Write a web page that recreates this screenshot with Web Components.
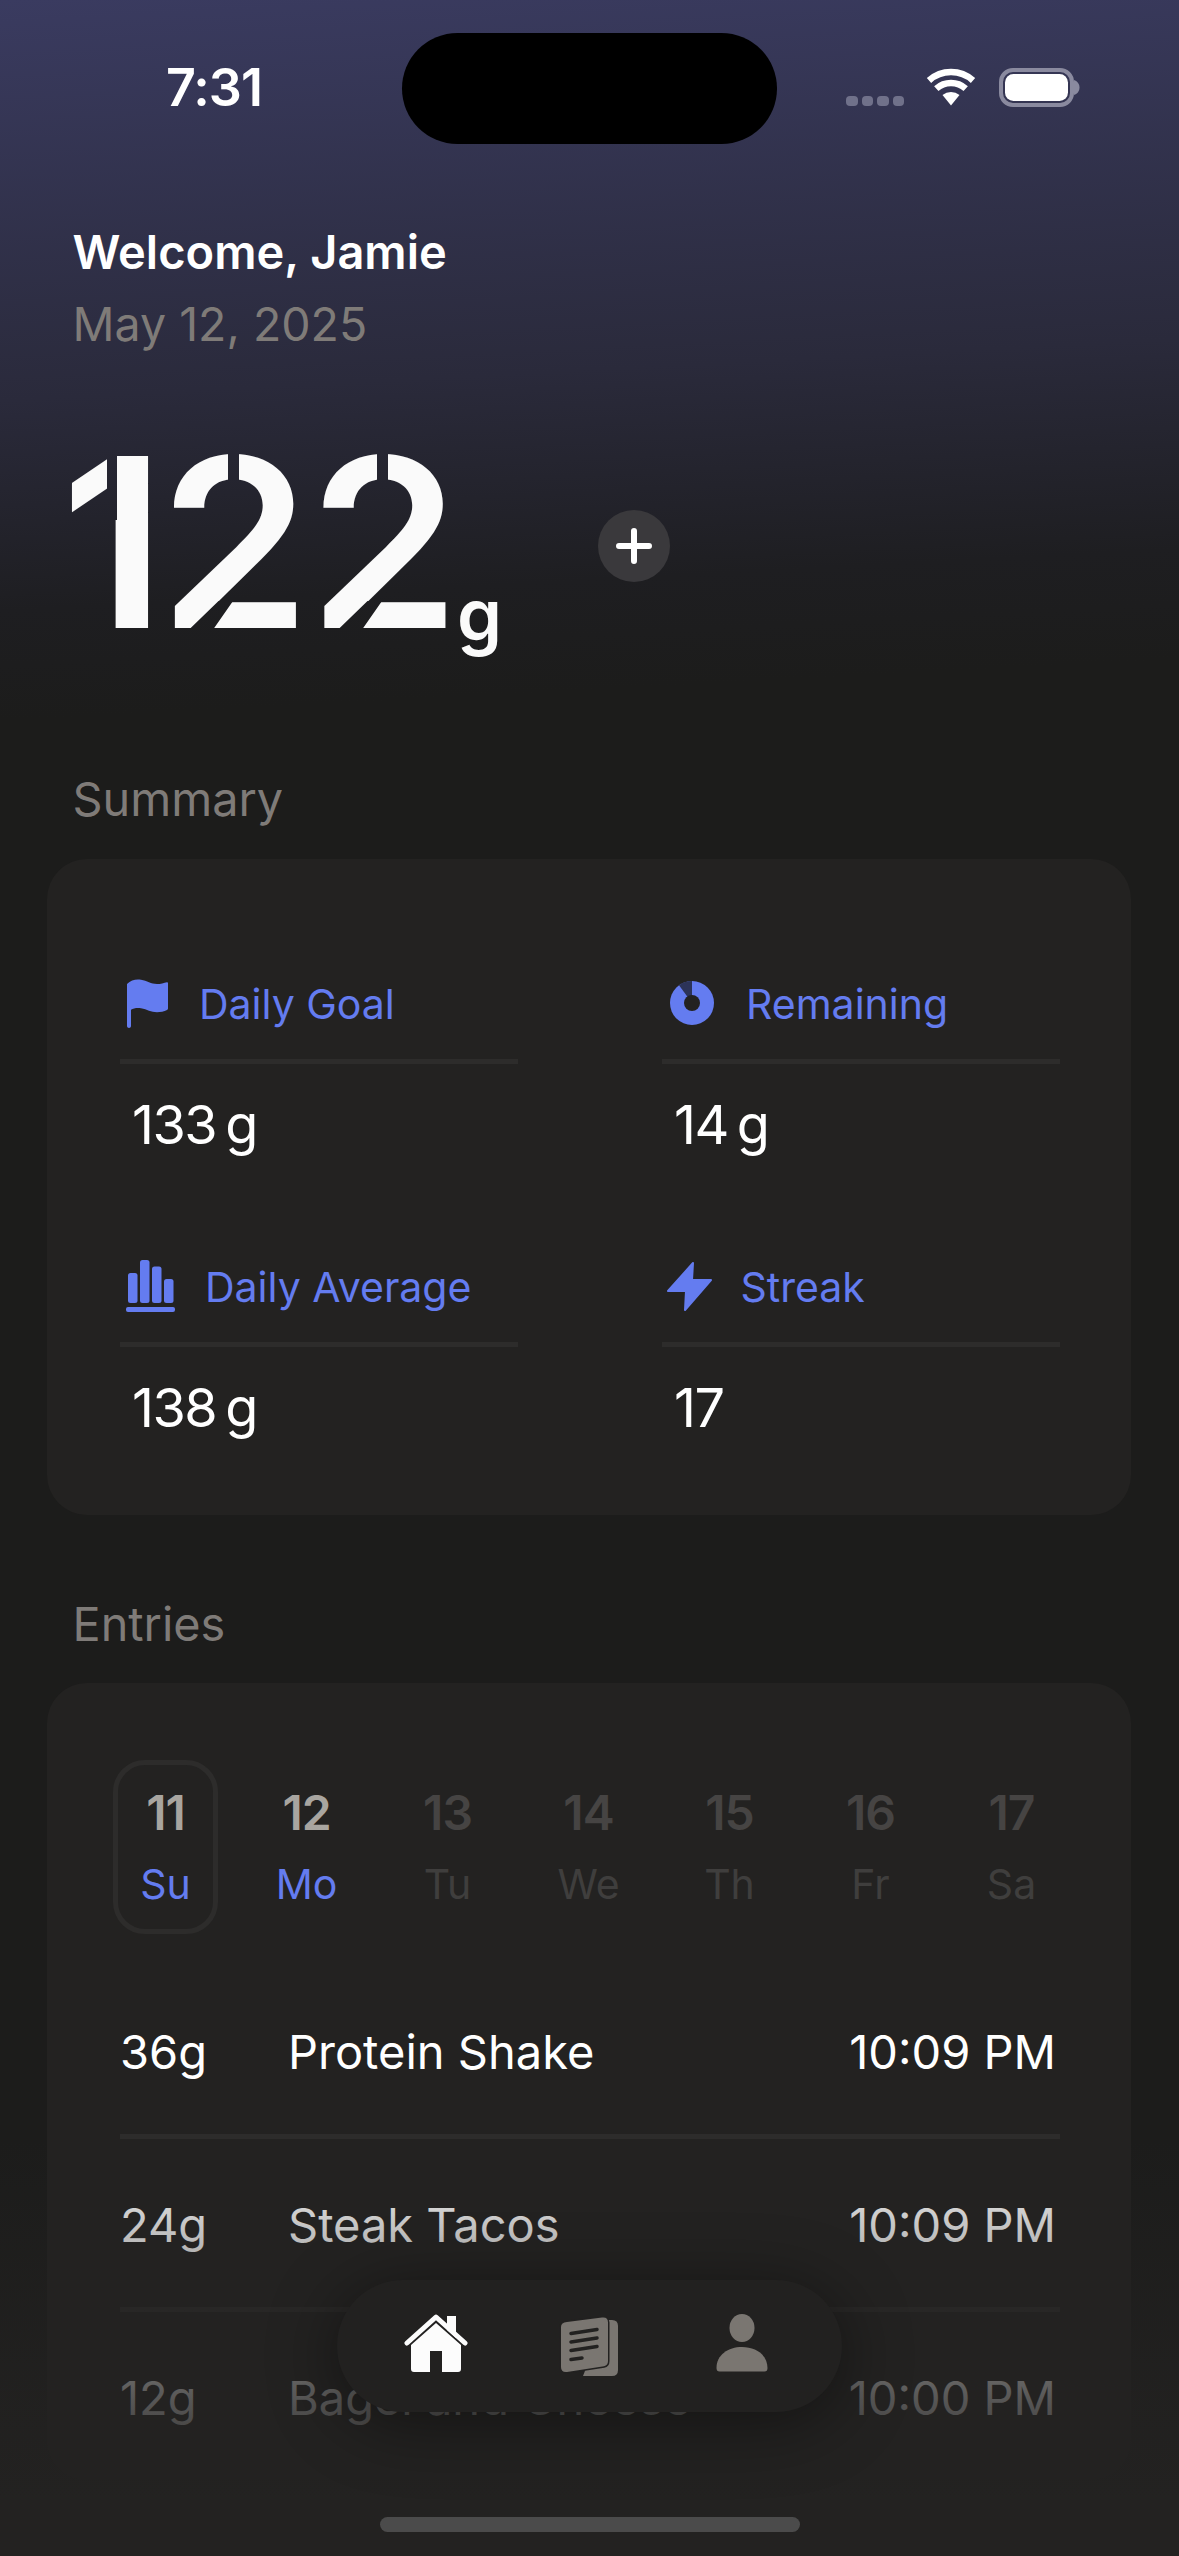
<!DOCTYPE html>
<html lang="en">
<head>
<meta charset="utf-8">
<title>Protein</title>
<style>
  html, body { margin: 0; padding: 0; background: #1c1c1b; }
</style>
</head>
<body>
<phone-app>
  <status-bar time="7:31"></status-bar>
  <greeting-header name="Jamie" date="May 12, 2025"></greeting-header>
  <protein-total unit="g"></protein-total>

  <section-card title="Summary" top="97" gap="30">
    <div class="stats" slot="body" style="display:grid;grid-template-columns:398px 398px;column-gap:144px;row-gap:100px;padding:116px 71px 74px 73px">
      <stat-cell label="Daily Goal" value="133" unit="g" style="--icon-w:79px">
        <svg slot="icon" width="41" height="49" viewBox="0 0 41 49" style="margin-left:7px"><path fill="#647cf0" d="M0 5C4 1 9 0 14 .8c6 1 10 4.200 16 4.200 3.500 0 7-1 10-1.800.5 0 1 .4 1 1v25c0 1-.4 1.400-1 1.700-3 1.300-6.500 2.300-10 2.300-6 0-10-3-16-4-4-.6-7.500 0-10 1.500V47c0 1.200-1 2-2 2s-2-.8-2-2z"/></svg>
      </stat-cell>
      <stat-cell label="Remaining" value="14" unit="g" style="--icon-w:84px">
        <svg slot="icon" width="44" height="44" viewBox="0 0 44 44" style="margin-left:8px"><circle cx="22" cy="22" r="22" fill="#647cf0"/><path fill="#2c3358" d="M22 22V0A22 22 0 0 0 9 4.200z"/><circle cx="22" cy="22" r="8" fill="#232221"/></svg>
      </stat-cell>
      <stat-cell label="Daily Average" value="138" unit="g" style="--icon-w:85px">
        <svg slot="icon" width="49" height="52" viewBox="0 0 49 52" style="margin-left:6px" fill="#647cf0"><rect x="2" y="13" width="9.500" height="30" rx="2.500"/><rect x="14" y="0" width="9.500" height="43" rx="2.500"/><rect x="26" y="6.500" width="9.500" height="36.500" rx="2.500"/><rect x="38" y="19" width="9.500" height="24" rx="2.500"/><rect x="0" y="47" width="49" height="5" rx="2"/></svg>
      </stat-cell>
      <stat-cell label="Streak" value="17" style="--icon-w:78.500px">
        <svg slot="icon" width="45" height="49" viewBox="0 0 45 49" style="margin-left:5px"><path fill="#647cf0" stroke="#647cf0" stroke-width="2" stroke-linejoin="round" d="M26 1 1 29h18l-1 19 26-30H25z"/></svg>
      </stat-cell>
    </div>
  </section-card>

  <section-card title="Entries" top="79" gap="29">
    <div slot="body" style="padding:77px 0 0 48px">
      <week-strip>
        <day-cell num="11" day="Su" state="selected"></day-cell>
        <day-cell num="12" day="Mo" state="today"></day-cell>
        <day-cell num="13" day="Tu"></day-cell>
        <day-cell num="14" day="We"></day-cell>
        <day-cell num="15" day="Th"></day-cell>
        <day-cell num="16" day="Fr"></day-cell>
        <day-cell num="17" day="Sa"></day-cell>
      </week-strip>
      <div style="padding:32px 71px 0 25px">
        <entry-row amount="36g" name="Protein Shake" time="10:09 PM"></entry-row>
        <entry-row amount="24g" name="Steak Tacos" time="10:09 PM"></entry-row>
        <entry-row amount="12g" name="Bagel and Cheese" time="10:00 PM"></entry-row>
      </div>
    </div>
  </section-card>

  <bottom-chrome></bottom-chrome>
</phone-app>

<script>
const FONT = `"Inter", "Liberation Sans", sans-serif`;

class PhoneApp extends HTMLElement {
  constructor() {
    super();
    this.attachShadow({ mode: 'open' });
    this.shadowRoot.innerHTML = `
      <style>
        :host {
          display: block;
          position: relative;
          width: 1179px;
          height: 2556px;
          overflow: hidden;
          color: #fff;
          font-family: ${FONT};
          background: linear-gradient(177deg, #3a3b60 0, #2a2a3b 400px, #1e1e21 610px, #1c1c1b 720px);
        }
      </style>
      <slot></slot>
    `;
  }
}

class StatusBar extends HTMLElement {
  constructor() {
    super();
    this.attachShadow({ mode: 'open' });
  }

  connectedCallback() {
    this.shadowRoot.innerHTML = `
      <style>
        :host { display: grid; grid-template-columns: 402px 375px 402px; height: 111px; padding-top: 33px; }
        .time { display: flex; justify-content: center; padding: 0 0 0 26px; align-items: center; height: 110px; font-size: 52px; font-weight: 600; letter-spacing: -1px; margin-top: -1px; }
        .island { background: #000; border-radius: 56px; }
        .icons { display: flex; align-items: flex-start; padding: 35px 0 0 69px; }
        .signal { display: flex; gap: 4px; margin-top: 28px; }
        .signal i { width: 11.500px; height: 10px; border-radius: 4px; background: #70718a; }
        .wifi { margin-left: 22px; }
        .batt { margin-left: 23px; }
      </style>
      <div class="time">${this.getAttribute('time')}</div>
      <div class="island"></div>
      <div class="icons">
        <div class="signal"><i></i><i></i><i></i><i></i></div>
        <svg class="wifi" width="50" height="38" viewBox="0 0 50 38" fill="none" stroke="#fff" stroke-width="6.500"><path d="M3 12.500a33 33 0 0 1 44 0"/><path d="M10.300 20.700a22 22 0 0 1 29.400 0"/><path fill="#fff" stroke="none" d="M25 37.500 16.500 27a13.500 13.500 0 0 1 17 0z"/></svg>
        <svg class="batt" width="81" height="39" viewBox="0 0 81 39"><rect x="2" y="2" width="71" height="35" rx="12" fill="none" stroke="#8a8a9f" stroke-width="4"/><rect x="6" y="6" width="63" height="27" rx="8.500" fill="#fff"/><path fill="#8a8a9f" d="M75 12c3 1 5.500 3.500 5.500 7.500S78 26 75 27z"/></svg>
      </div>
    `;
  }
}

class GreetingHeader extends HTMLElement {
  constructor() {
    super();
    this.attachShadow({ mode: 'open' });
  }

  connectedCallback() {
    this.shadowRoot.innerHTML = `
      <style>
        :host { display: block; margin-top: 71.500px; padding-left: 72.500px; font-size: 47px; line-height: 72px; }
        .hello { font-weight: 600; color: #fff; }
        .date { color: #7f7b78; font-size: 46.500px; }
      </style>
      <div class="hello">Welcome, ${this.getAttribute('name')}</div>
      <div class="date">${this.getAttribute('date')}</div>
    `;
  }
}

class ProteinTotal extends HTMLElement {
  constructor() {
    super();
    this.attachShadow({ mode: 'open' });
  }

  connectedCallback() {
    // stencil gaps are cut out of the real text with a vector mask
    const cut = (dx) => `M${168 + dx} 30H${179 + dx}V70H${168 + dx}Z` +
      `M${124.5 + dx} 222H${150 + dx}L${173 + dx} 189H${158.5 + dx}Z`;
    const path = `M0 0H400V260H0Z M47 28H57V108H47Z ${cut(0)} ${cut(149)}`;
    const svg = `<svg xmlns='http://www.w3.org/2000/svg' width='400' height='260'><path fill-rule='evenodd' d='${path}'/></svg>`;
    const mask = `url("data:image/svg+xml,${encodeURIComponent(svg)}")`;
    this.shadowRoot.innerHTML = `
      <style>
        :host { display: flex; align-items: flex-start; height: 260px; margin-top: 52.500px; padding-left: 60px; color: #fafafa; }
        .num { display: block; width: 397px; height: 260px; font-size: 236px; line-height: 260px; font-weight: 600; white-space: nowrap; -webkit-mask-image: ${mask}; mask-image: ${mask}; }
        .num span { display: inline-block; transform-origin: 0 50%; }
        .one { transform: translateX(.5px) scaleX(1.06); }
        .two { letter-spacing: -2px; transform: translateX(-1px) scaleX(1.03); }
        .unit { font-size: 72px; line-height: 72px; font-weight: 600; margin-top: 167px; }
        .add { display: flex; align-items: center; justify-content: center; width: 72px; height: 72px; margin: 98px 0 0 96px; border-radius: 50%; background: #3a393c; }
      </style>
      <div class="num"><span class="one">1</span><span class="two">22</span></div>
      <div class="unit">${this.getAttribute('unit')}</div>
      <div class="add"><svg width="36" height="36" viewBox="0 0 36 36" stroke="#fff" stroke-width="6" stroke-linecap="round"><path d="M18 3v30M3 18h30"/></svg></div>
    `;
  }
}

class SectionCard extends HTMLElement {
  constructor() {
    super();
    this.attachShadow({ mode: 'open' });
  }

  connectedCallback() {
    this.shadowRoot.innerHTML = `
      <style>
        :host { display: block; margin-top: ${this.getAttribute('top')}px; }
        h2 { margin: 0 0 ${this.getAttribute('gap')}px 72.500px; font-size: 46.800px; line-height: 60px; font-weight: 400; color: #7f7b78; }
        .card { margin: 0 48px 0 47px; border-radius: 40px; background: #232221; }
      </style>
      <h2>${this.getAttribute('title')}</h2>
      <div class="card"><slot name="body"></slot></div>
    `;
  }
}

class StatCell extends HTMLElement {
  constructor() {
    super();
    this.attachShadow({ mode: 'open' });
  }

  connectedCallback() {
    const unit = this.getAttribute('unit');
    this.shadowRoot.innerHTML = `
      <style>
        :host { display: block; }
        .head { display: flex; align-items: center; height: 56px; padding-bottom: 28px; border-bottom: 5px solid #2d2c2b; color: #647cf0; font-size: 41px; line-height: 56px; }
        .ico { display: flex; align-items: center; width: var(--icon-w, 80px); flex: none; }
        .head span { margin-top: 2px; }
        .val { margin-top: 28px; padding-left: 12px; font-size: 54px; line-height: 66px; letter-spacing: -1.500px; }
        .val span { margin-left: 9px; }
      </style>
      <div class="head"><div class="ico"><slot name="icon"></slot></div><span>${this.getAttribute('label')}</span></div>
      <div class="val">${this.getAttribute('value')}${unit ? `<span>${unit}</span>` : ''}</div>
    `;
  }
}

class WeekStrip extends HTMLElement {
  constructor() {
    super();
    this.attachShadow({ mode: 'open' });
    this.shadowRoot.innerHTML = `
      <style>
        :host { display: grid; grid-template-columns: repeat(7, 141px); }
      </style>
      <slot></slot>
    `;
  }
}

class DayCell extends HTMLElement {
  constructor() {
    super();
    this.attachShadow({ mode: 'open' });
  }

  connectedCallback() {
    const state = this.getAttribute('state') || '';
    this.shadowRoot.innerHTML = `
      <style>
        :host { display: block; }
        .box { box-sizing: border-box; width: 105px; height: 174px; margin: 0 auto; padding-top: 18px; border: 5px solid transparent; border-radius: 32px; text-align: center; color: #464443; }
        .box.selected { border-color: #2d2c2b; }
        .n { font-size: 48px; line-height: 60px; font-weight: 600; letter-spacing: -1px; }
        .d { margin-top: 13px; font-size: 41px; line-height: 56px; color: #3f3e3d; }
        .selected .n, .today .n { color: #a8a5a0; }
        .selected .d, .today .d { color: #647cf0; }
      </style>
      <div class="box ${state}">
        <div class="n">${this.getAttribute('num')}</div>
        <div class="d">${this.getAttribute('day')}</div>
      </div>
    `;
  }
}

class EntryRow extends HTMLElement {
  constructor() {
    super();
    this.attachShadow({ mode: 'open' });
  }

  connectedCallback() {
    this.shadowRoot.innerHTML = `
      <style>
        :host { display: flex; align-items: center; height: 165px; padding: 3px 4px 0 0; border-bottom: 5px solid #2d2c2b; font-size: 47px; color: #fff; }
        :host(:last-child) { border-bottom: 0; }
        .amt { width: 168px; flex: none; }
        .name { flex: 1; white-space: nowrap; }
      </style>
      <div class="amt">${this.getAttribute('amount')}</div>
      <div class="name">${this.getAttribute('name')}</div>
      <div class="time">${this.getAttribute('time')}</div>
    `;
  }
}

class BottomChrome extends HTMLElement {
  constructor() {
    super();
    this.attachShadow({ mode: 'open' });
    this.shadowRoot.innerHTML = `
      <style>
        :host { display: block; position: absolute; left: 0; right: 0; top: 2140px; bottom: 0; pointer-events: none; }
        .fade { position: absolute; inset: 0; background: linear-gradient(to bottom, rgba(35,34,33,0) 0, rgba(35,34,33,.26) 86px, rgba(35,34,33,.76) 259px, #232221 360px); }
        .tabs { position: absolute; left: 337px; top: 140px; box-sizing: border-box; width: 505px; height: 132px; padding-left: 22.500px; display: grid; grid-template-columns: repeat(3, 153px); align-items: center; justify-items: center; border-radius: 66px; background: #222120; box-shadow: 0 10px 70px rgba(0,0,0,.45); }
        .home-bar { position: absolute; left: 380px; top: 377px; width: 420px; height: 15px; border-radius: 8px; background: #4b4b4b; }
        .up { margin-top: -6px; }
      </style>
      <div class="fade"></div>
      <nav class="tabs">
        <svg class="up" width="64" height="60" viewBox="0 0 64 60" fill="#fcfcfc"><path d="M43 3h9v22l-9-8z"/><path fill="none" stroke="#fcfcfc" stroke-width="5" stroke-linecap="round" stroke-linejoin="round" d="M3 30 32 4l29 26"/><path d="M32 10 7 32v24q0 3 3 3h16V38h12v21h16q3 0 3-3V32z"/></svg>
        <svg width="60" height="62" viewBox="0 0 60 62" fill="#7a7671"><path d="M46 5h7q6 0 6 6v44q0 6-6 6H24z"/><path stroke="#222120" stroke-width="3" paint-order="stroke" d="M8 7 43 2.500q6-.8 6 5V46q0 4.500-4 5.200L8 57q-6 .6-6-5V12q0-4.400 6-5z"/><path fill="none" stroke="#222120" stroke-width="3.500" stroke-linecap="round" d="M12 18.500 38 14.500M12 27 38 23M12 35.500 38 31.500M12 44.500 23 43"/></svg>
        <svg class="up" width="52" height="58" viewBox="0 0 52 58" fill="#7a7671"><ellipse cx="26" cy="14" rx="12.500" ry="14"/><path d="M.5 54C.5 41 12 33 26 33s25.500 8 25.500 21q0 3.500-3 3.500h-45Q.5 57.500.5 54z"/></svg>
      </nav>
      <div class="home-bar"></div>
    `;
  }
}

customElements.define('phone-app', PhoneApp);
customElements.define('status-bar', StatusBar);
customElements.define('greeting-header', GreetingHeader);
customElements.define('protein-total', ProteinTotal);
customElements.define('section-card', SectionCard);
customElements.define('stat-cell', StatCell);
customElements.define('week-strip', WeekStrip);
customElements.define('day-cell', DayCell);
customElements.define('entry-row', EntryRow);
customElements.define('bottom-chrome', BottomChrome);
</script>
</body>
</html>
